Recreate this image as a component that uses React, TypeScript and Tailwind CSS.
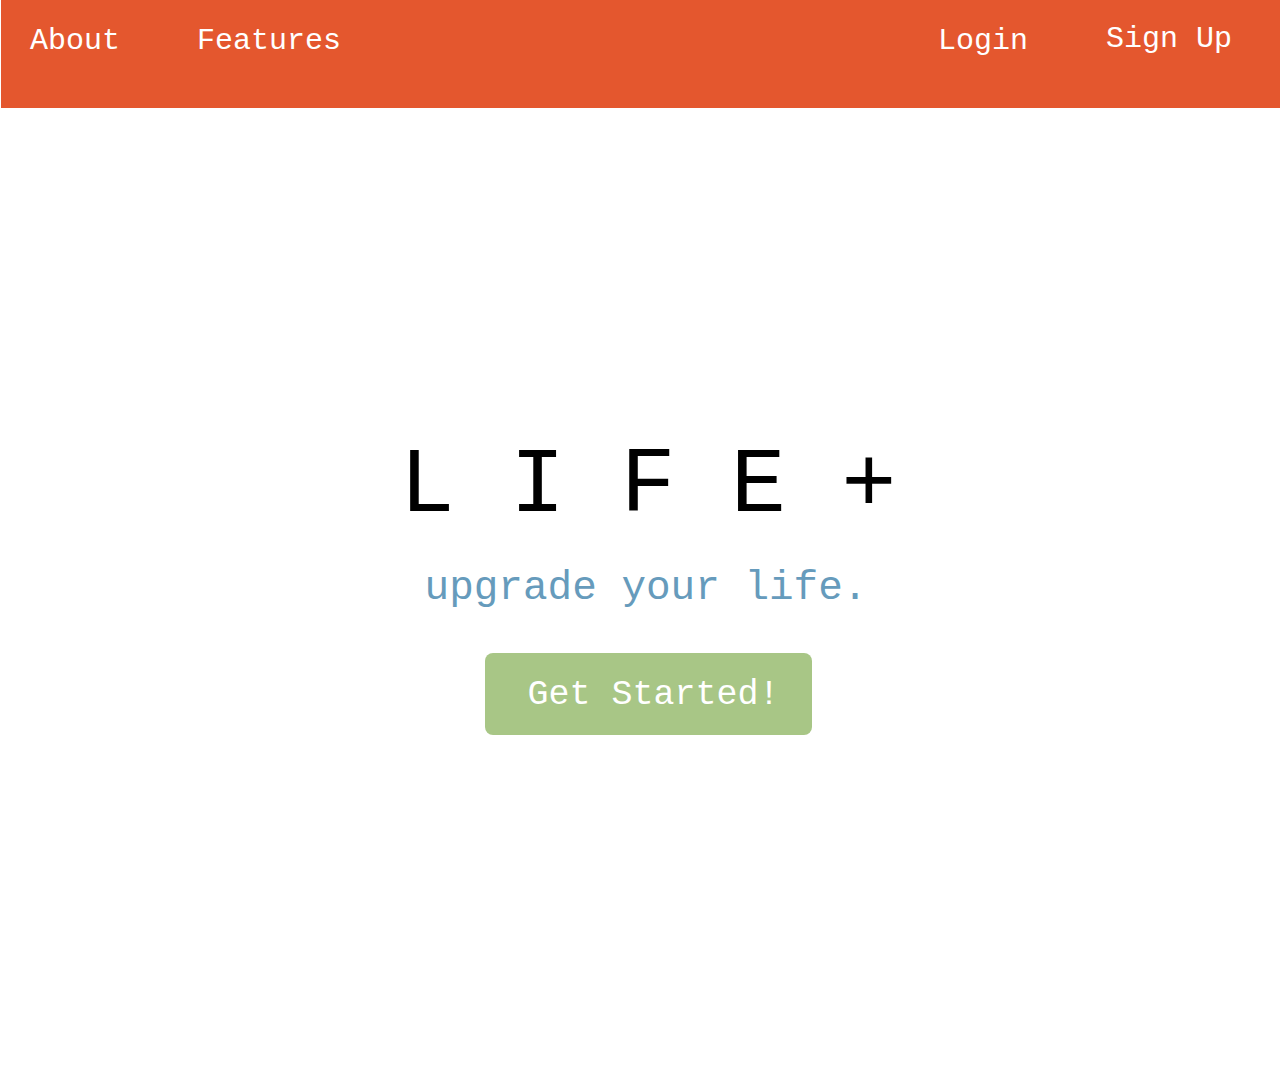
const font = { fontFamily: '"Liberation Mono", "DejaVu Sans Mono", monospace' };

const NavBar = () => {
  return (
    <nav className="h-[108px] ml-px bg-[#e4572e] flex justify-between text-white text-[30px] leading-none">
      <div className="flex pl-[29px] pt-[26px] gap-[77px]">
        <a>About</a>
        <a>Features</a>
      </div>
      <div className="flex items-start pr-[48px] gap-[78px]">
        <a className="mt-[26px]">Login</a>
        <a className="mt-[24px]">Sign Up</a>
      </div>
    </nav>
  );
};

const Hero = () => {
  return (
    <main className="flex flex-col items-center pt-[333px] pl-4">
      <h1 className="text-[92px] leading-none text-black whitespace-pre">L I F E +</h1>
      <p className="mt-[35px] text-[41px] leading-none text-[#669bbc] -ml-1">upgrade your life.</p>
      <button className="mt-[44px] w-[327px] h-[82px] rounded-lg bg-[#a8c686] text-white text-[35px] leading-none text-left pl-[43px] pt-[2px]">
        Get Started!
      </button>
    </main>
  );
};

export default function App() {
  return (
    <div className="min-h-[1080px] bg-white" style={font}>
      <NavBar />
      <Hero />
    </div>
  );
}
